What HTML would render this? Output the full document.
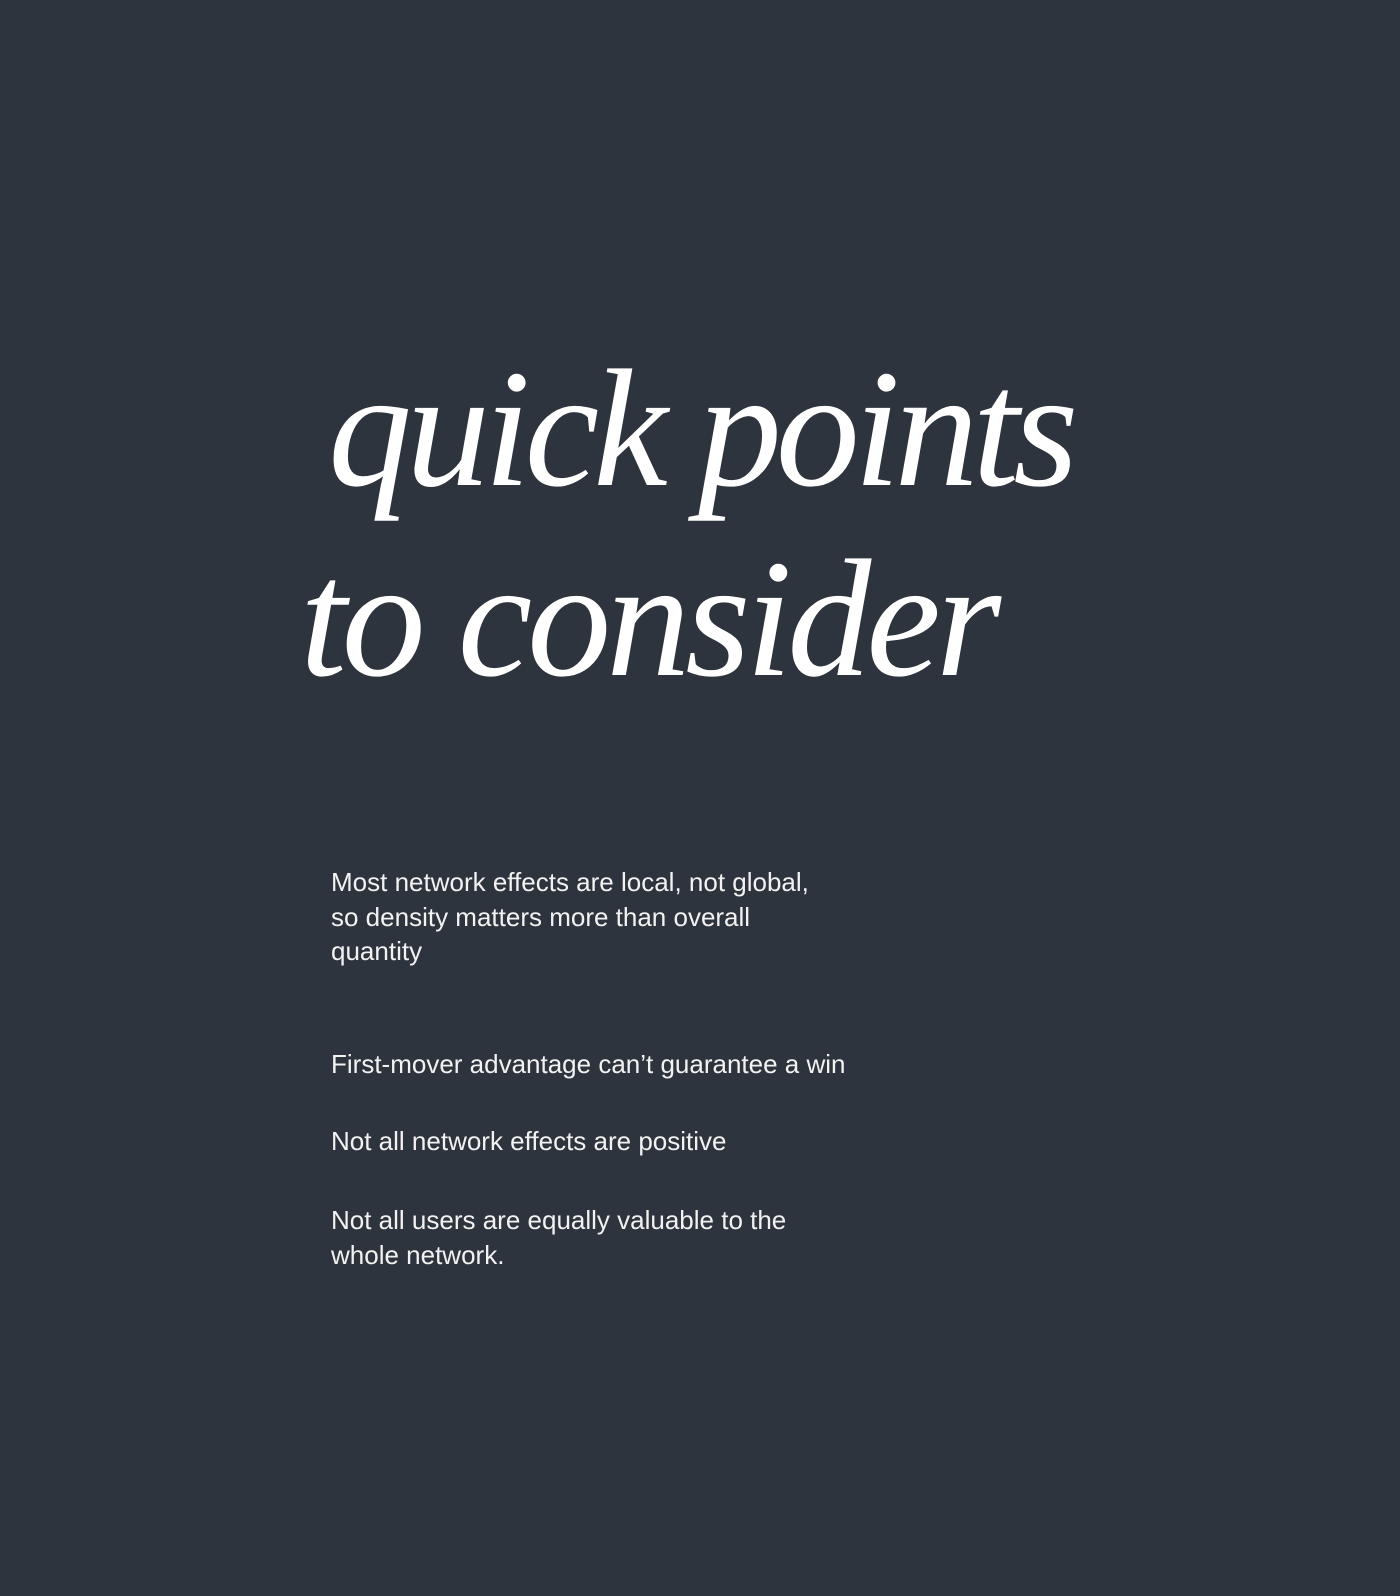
<!DOCTYPE html>
<html><head><meta charset="utf-8"><style>
html,body{margin:0;padding:0;}
body{width:1400px;height:1596px;background:#2e343d;position:relative;overflow:hidden;color:#fff;}
.t{position:absolute;font-family:"Liberation Serif",serif;font-style:italic;color:#fff;white-space:nowrap;line-height:1;}
.p{position:absolute;left:331px;font-family:"Liberation Sans",sans-serif;font-size:26px;line-height:34.6px;color:#f2f2f2;font-weight:300;margin:0;width:540px;}
</style></head><body>
<div class="t" style="left:328px;top:345px;font-size:168px;letter-spacing:-6px;">quick points</div>
<div class="t" style="left:300px;top:535px;font-size:168px;letter-spacing:-5px;">to consider</div>
<p class="p" style="top:865px;">Most network effects are local, not global,<br>so density matters more than overall<br>quantity</p>
<p class="p" style="top:1047px;">First-mover advantage can’t guarantee a win</p>
<p class="p" style="top:1124px;">Not all network effects are positive</p>
<p class="p" style="top:1203px;">Not all users are equally valuable to the<br>whole network.</p>
</body></html>
